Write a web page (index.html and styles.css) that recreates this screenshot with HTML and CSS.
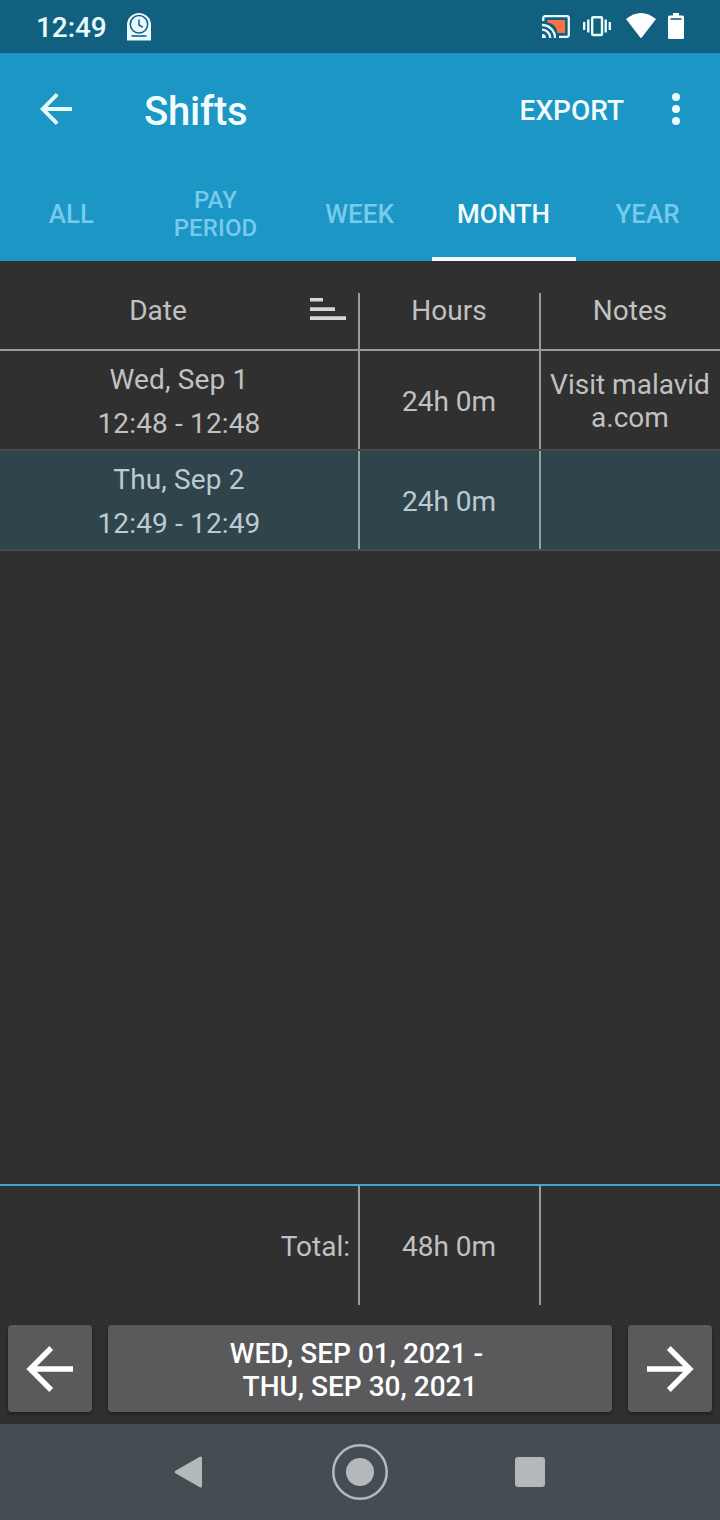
FILE: index.html
```html
<!DOCTYPE html>
<html lang="en">
<head>
<meta charset="utf-8">
<title>Shifts</title>
<link rel="stylesheet" href="styles.css">
</head>
<body>
<div class="screen">
  <div class="status">
    <span class="clock">12:49</span>
    <svg class="i-punch" width="24" height="28" viewBox="0 0 24 28"><path d="M0 27.500V12a12 12 0 0 1 24 0v15.500z" fill="#e9fbff"/><circle cx="12" cy="11.300" r="8.700" fill="none" stroke="#116080" stroke-width="1.500"/><path d="M12 6.500v5.500l3.800 2.300" fill="none" stroke="#116080" stroke-width="1.500"/><path d="M4.500 23h15" stroke="#116080" stroke-width="1.600"/></svg>
    <span class="spacer"></span>
    <svg class="i-cast" width="28" height="23" viewBox="0 0 28 23"><path d="M5.500 5H23v13h-7.500A11 11 0 0 0 5.500 7.500z" fill="#ff7043"/><path d="M1.200 6V3.200a2 2 0 0 1 2-2h21.600a2 2 0 0 1 2 2v16.600a2 2 0 0 1-2 2H17" fill="none" stroke="#e9fbff" stroke-width="2.300"/><path d="M0 19a4 4 0 0 1 4 4H0z" fill="#e9fbff"/><path d="M0 14.700a8.300 8.300 0 0 1 8.300 8.300M0 10a13 13 0 0 1 13 13" fill="none" stroke="#e9fbff" stroke-width="2.300"/></svg>
    <svg class="i-vib" width="28" height="21" viewBox="0 0 28 21" fill="none" stroke="#e9fbff" stroke-width="2.400"><rect x="9.200" y="1.200" width="9.800" height="17.800" rx="1"/><path d="M5.300 3.500v13M22.700 3.500v13M1.200 6v8M26.800 6v8"/></svg>
    <svg class="i-wifi" width="30" height="25" viewBox="0 0 30 25"><path d="M0 6Q15-6 30 6L16 24.300q-1 1.200-2 0z" fill="#fff"/></svg>
    <svg class="i-batt" width="16" height="26" viewBox="0 0 16 26"><path d="M5 0h6v2.500h3.500A1.500 1.500 0 0 1 16 4v20.500a1.500 1.500 0 0 1-1.500 1.500h-13A1.500 1.500 0 0 1 0 24.500V4a1.500 1.500 0 0 1 1.500-1.500H5z" fill="#fff"/><path d="M2.500 6h11" stroke="#116080" stroke-width="1.600"/></svg>
  </div>
  <header class="appbar">
    <svg class="back" width="32" height="32" viewBox="0 0 32 32" fill="none" stroke="#e9fbff" stroke-width="3.800"><path d="M32 16H3M17.200 1.300L2.700 16l14.500 14.700"/></svg>
    <h1 class="title">Shifts</h1>
    <span class="spacer"></span>
    <span class="export">EXPORT</span>
    <svg class="more" width="8" height="32" viewBox="0 0 8 32" fill="#e9fbff"><circle cx="4" cy="4" r="4"/><circle cx="4" cy="16" r="4"/><circle cx="4" cy="28" r="4"/></svg>
  </header>
  <nav class="tabs">
    <div class="tab">ALL</div>
    <div class="tab small">PAY<br>PERIOD</div>
    <div class="tab">WEEK</div>
    <div class="tab active">MONTH</div>
    <div class="tab">YEAR</div>
  </nav>
  <main class="table">
    <div class="row head">
      <div class="cell sortable"><span class="label">Date</span><svg width="36" height="22" viewBox="0 0 36 22" fill="#d6d6d6"><path d="M0 0h13v3.500H0zM0 9.200h25v3.700H0zM0 18.200h36V22H0z"/></svg></div>
      <div class="cell">Hours</div>
      <div class="cell">Notes</div>
    </div>
    <div class="row">
      <div class="cell date"><span>Wed, Sep 1</span><span>12:48 - 12:48</span></div>
      <div class="cell">24h 0m</div>
      <div class="cell notes">Visit malavid<br>a.com</div>
    </div>
    <div class="row alt">
      <div class="cell date"><span>Thu, Sep 2</span><span>12:49 - 12:49</span></div>
      <div class="cell">24h 0m</div>
      <div class="cell"></div>
    </div>
  </main>
  <div class="row total">
    <div class="cell sum">Total:</div>
    <div class="cell">48h 0m</div>
    <div class="cell"></div>
  </div>
  <div class="pager">
    <div class="btn prev"><svg width="47" height="46" viewBox="0 0 47 46" fill="none" stroke="#fff" stroke-width="5.400"><path d="M47 23H5M25.200 2L4.200 23l21 21"/></svg></div>
    <div class="btn range"><span class="line first">WED, SEP 01, 2021 -</span><span class="line">THU, SEP 30, 2021</span></div>
    <div class="btn"><svg width="47" height="46" viewBox="0 0 47 46" fill="none" stroke="#fff" stroke-width="5.400"><path d="M0 23h42M21.800 2l21 21-21 21"/></svg></div>
  </div>
  <div class="sysnav">
    <svg class="n-back" width="29" height="34" viewBox="0 0 29 34"><path d="M2.200 17L26.500 3v28z" fill="#b3b8ba" stroke="#b3b8ba" stroke-width="3" stroke-linejoin="round"/></svg>
    <svg class="n-home" width="56" height="56" viewBox="0 0 56 56"><circle cx="28" cy="28" r="26.700" fill="none" stroke="#b3b8ba" stroke-width="2.600"/><circle cx="28" cy="28" r="14" fill="#b3b8ba"/></svg>
    <span class="n-recent"></span>
  </div>
</div>
</body>
</html>
```
FILE: styles.css
```css
* { box-sizing: border-box; }
body { margin: 0; background: #303030; }
svg { display: block; flex: none; }
.screen {
  width: 720px; height: 1520px;
  display: flex; flex-direction: column;
  background: #303030; color: #c1c1c1;
  font: 400 28px/33px Roboto, sans-serif;
}
.spacer { flex: 1; }

.status { height: 53px; flex: none; display: flex; align-items: flex-start; background: #116080; padding: 0 36px; }
.clock { width: 91px; padding-top: 11px; font-weight: 500; letter-spacing: -.1px; color: #e9fbff; }
.i-punch { margin-top: 13px; }
.i-cast { margin: 15px 13px 0 0; }
.i-vib { margin: 16px 15px 0 0; }
.i-wifi { margin: 13px 12px 0 0; }
.i-batt { margin-top: 13px; }

.appbar { height: 112px; flex: none; display: flex; align-items: center; background: #1b96c5; color: #f2fdff; padding: 0 40px; }
.title { margin: 5px 0 0 72px; font-size: 40px; line-height: 47px; font-weight: 500; letter-spacing: -.2px; }
.export { margin: 2px 48px 0 0; font-weight: 500; }

.tabs { height: 96px; flex: none; display: grid; grid-template-columns: repeat(5, 1fr); background: #1b96c5; }
.tab { display: flex; align-items: center; justify-content: center; text-align: center; padding: 2px 1px 0 0; font-size: 26px; line-height: 30px; font-weight: 500; color: #76caeb; }
.tab.small { font-size: 24px; line-height: 28px; letter-spacing: .1px; }
.tab.active { color: #f2fdff; border-bottom: 4px solid #f2fdff; padding-top: 6px; }

.table { flex: 1; padding-top: 32px; }
.row { display: grid; grid-template-columns: 360px 181px 179px; height: 100px; border-bottom: 2px solid #48494b; }
.cell { display: flex; align-items: center; justify-content: center; text-align: center; padding: 3px 1px 0 0; border-right: 2px solid #9a9a9a; }
.cell:last-child { border-right: 0; }
.head { height: 58px; border-color: #9a9a9a; }
.head .cell { align-items: flex-start; padding-top: 1px; }
.sortable .label { flex: 1; padding-left: 6px; }
.sortable svg { margin: 4px 11px 0 0; }
.date { flex-direction: column; gap: 11px; padding-right: 0; letter-spacing: .15px; }
.notes { padding-top: 1px; }
.alt { background: #30444b; color: #bccbd2; }
.alt .cell { border-color: #93a0a4; }

.total { height: 121px; flex: none; border-top: 2px solid #42a5c9; border-bottom: 0; }
.total .cell { padding-top: 1px; }
.total .sum { justify-content: flex-end; padding-right: 8px; }

.pager { flex: none; height: 119px; display: flex; gap: 16px; padding: 20px 8px 12px; }
.btn { width: 84px; display: flex; align-items: center; justify-content: center; border-radius: 4px; background: #5a5a5c; box-shadow: 0 2px 4px rgba(0, 0, 0, .4); color: #fff; font-weight: 500; }
.prev { padding-right: 1px; }
.range { flex: 1; flex-direction: column; padding-top: 3px; }
.first { margin-right: 7px; }

.sysnav { flex: none; height: 96px; display: flex; align-items: center; background: #454d52; padding-left: 174px; }
.n-home { margin: 0 127px 0 129px; }
.n-recent { width: 30px; height: 30px; border-radius: 3px; background: #b3b8ba; }
```
